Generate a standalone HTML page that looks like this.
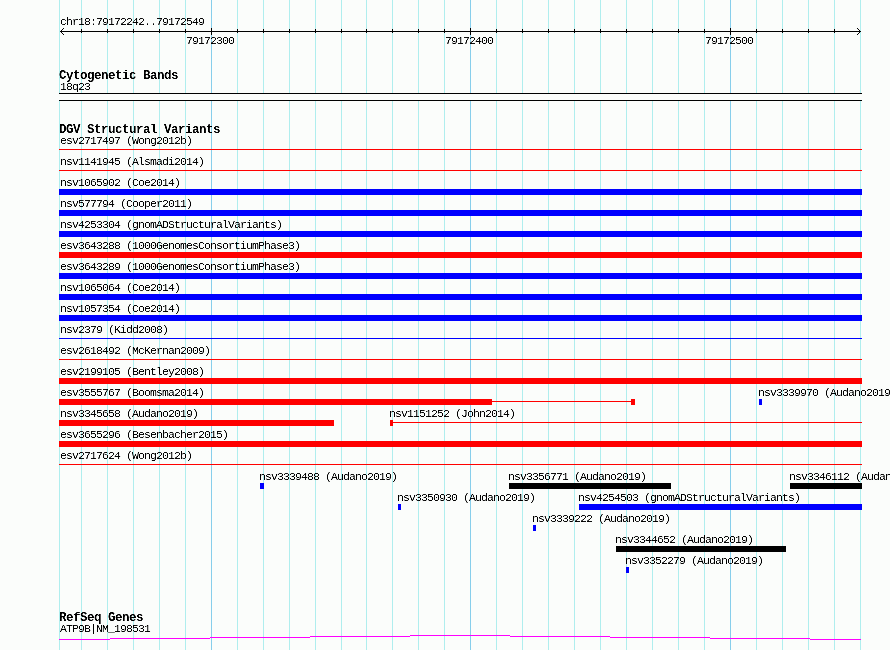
<!DOCTYPE html>
<html><head><meta charset="utf-8"><title>chr18:79172242..79172549</title>
<style>
html,body{margin:0;padding:0;}
body{width:890px;height:650px;overflow:hidden;background:#fbfdfb;position:relative;}
svg{position:absolute;left:0;top:0;}
#txt{position:absolute;left:0;top:0;width:890px;height:650px;filter:url(#crisp);}
.t,.b{position:absolute;white-space:pre;font-family:"Liberation Mono",monospace;color:#000;transform-origin:0 0;}
.t{font-size:11.5px;line-height:11.5px;letter-spacing:-0.9px;transform:scaleX(1.0);}
.b{font-size:12.5px;line-height:12.5px;font-weight:bold;letter-spacing:-0.5px;transform:scaleX(1.0);}
</style></head><body>
<svg width="890" height="650" viewBox="0 0 890 650" shape-rendering="crispEdges">
<defs><filter id="crisp" x="0" y="0" width="100%" height="100%" color-interpolation-filters="sRGB"><feComponentTransfer><feFuncA type="linear" slope="1.9" intercept="-0.45"/></feComponentTransfer></filter></defs>
<rect x="59" y="0" width="1" height="650" fill="#afeeee"/>
<rect x="860" y="0" width="1" height="650" fill="#afeeee"/>
<rect x="81" y="0" width="1" height="650" fill="#afeeee"/>
<rect x="107" y="0" width="1" height="650" fill="#afeeee"/>
<rect x="133" y="0" width="1" height="650" fill="#afeeee"/>
<rect x="159" y="0" width="1" height="650" fill="#afeeee"/>
<rect x="185" y="0" width="1" height="650" fill="#afeeee"/>
<rect x="237" y="0" width="1" height="650" fill="#afeeee"/>
<rect x="263" y="0" width="1" height="650" fill="#afeeee"/>
<rect x="289" y="0" width="1" height="650" fill="#afeeee"/>
<rect x="315" y="0" width="1" height="650" fill="#afeeee"/>
<rect x="341" y="0" width="1" height="650" fill="#afeeee"/>
<rect x="366" y="0" width="1" height="650" fill="#afeeee"/>
<rect x="392" y="0" width="1" height="650" fill="#afeeee"/>
<rect x="418" y="0" width="1" height="650" fill="#afeeee"/>
<rect x="444" y="0" width="1" height="650" fill="#afeeee"/>
<rect x="496" y="0" width="1" height="650" fill="#afeeee"/>
<rect x="522" y="0" width="1" height="650" fill="#afeeee"/>
<rect x="548" y="0" width="1" height="650" fill="#afeeee"/>
<rect x="574" y="0" width="1" height="650" fill="#afeeee"/>
<rect x="600" y="0" width="1" height="650" fill="#afeeee"/>
<rect x="626" y="0" width="1" height="650" fill="#afeeee"/>
<rect x="652" y="0" width="1" height="650" fill="#afeeee"/>
<rect x="678" y="0" width="1" height="650" fill="#afeeee"/>
<rect x="704" y="0" width="1" height="650" fill="#afeeee"/>
<rect x="756" y="0" width="1" height="650" fill="#afeeee"/>
<rect x="782" y="0" width="1" height="650" fill="#afeeee"/>
<rect x="808" y="0" width="1" height="650" fill="#afeeee"/>
<rect x="834" y="0" width="1" height="650" fill="#afeeee"/>
<rect x="211" y="0" width="1" height="650" fill="#87ceeb"/>
<rect x="470" y="0" width="1" height="650" fill="#87ceeb"/>
<rect x="730" y="0" width="1" height="650" fill="#87ceeb"/>
<rect x="60" y="31" width="801" height="1" fill="#000"/>
<rect x="81" y="29" width="1" height="4" fill="#000"/>
<rect x="107" y="29" width="1" height="4" fill="#000"/>
<rect x="133" y="29" width="1" height="4" fill="#000"/>
<rect x="159" y="29" width="1" height="4" fill="#000"/>
<rect x="185" y="29" width="1" height="4" fill="#000"/>
<rect x="237" y="29" width="1" height="4" fill="#000"/>
<rect x="263" y="29" width="1" height="4" fill="#000"/>
<rect x="289" y="29" width="1" height="4" fill="#000"/>
<rect x="315" y="29" width="1" height="4" fill="#000"/>
<rect x="341" y="29" width="1" height="4" fill="#000"/>
<rect x="366" y="29" width="1" height="4" fill="#000"/>
<rect x="392" y="29" width="1" height="4" fill="#000"/>
<rect x="418" y="29" width="1" height="4" fill="#000"/>
<rect x="444" y="29" width="1" height="4" fill="#000"/>
<rect x="496" y="29" width="1" height="4" fill="#000"/>
<rect x="522" y="29" width="1" height="4" fill="#000"/>
<rect x="548" y="29" width="1" height="4" fill="#000"/>
<rect x="574" y="29" width="1" height="4" fill="#000"/>
<rect x="600" y="29" width="1" height="4" fill="#000"/>
<rect x="626" y="29" width="1" height="4" fill="#000"/>
<rect x="652" y="29" width="1" height="4" fill="#000"/>
<rect x="678" y="29" width="1" height="4" fill="#000"/>
<rect x="704" y="29" width="1" height="4" fill="#000"/>
<rect x="756" y="29" width="1" height="4" fill="#000"/>
<rect x="782" y="29" width="1" height="4" fill="#000"/>
<rect x="808" y="29" width="1" height="4" fill="#000"/>
<rect x="834" y="29" width="1" height="4" fill="#000"/>
<rect x="211" y="28" width="1" height="7" fill="#000"/>
<rect x="470" y="28" width="1" height="7" fill="#000"/>
<rect x="730" y="28" width="1" height="7" fill="#000"/>
<rect x="61" y="30" width="1" height="1" fill="#000"/>
<rect x="61" y="32" width="1" height="1" fill="#000"/>
<rect x="859" y="30" width="1" height="1" fill="#000"/>
<rect x="859" y="32" width="1" height="1" fill="#000"/>
<rect x="62" y="29" width="1" height="1" fill="#000"/>
<rect x="62" y="33" width="1" height="1" fill="#000"/>
<rect x="858" y="29" width="1" height="1" fill="#000"/>
<rect x="858" y="33" width="1" height="1" fill="#000"/>
<rect x="63" y="28" width="1" height="1" fill="#000"/>
<rect x="63" y="34" width="1" height="1" fill="#000"/>
<rect x="857" y="28" width="1" height="1" fill="#000"/>
<rect x="857" y="34" width="1" height="1" fill="#000"/>
<rect x="59" y="94" width="803" height="6" fill="#fbfdfb"/>
<rect x="59" y="93" width="803" height="1" fill="#000"/>
<rect x="59" y="100" width="803" height="1" fill="#000"/>
<rect x="59" y="149" width="803" height="1" fill="#ff0000"/>
<rect x="59" y="170" width="803" height="1" fill="#ff0000"/>
<rect x="59" y="189" width="803" height="6" fill="#0000ff"/>
<rect x="59" y="210" width="803" height="6" fill="#0000ff"/>
<rect x="59" y="231" width="803" height="6" fill="#0000ff"/>
<rect x="59" y="252" width="803" height="6" fill="#ff0000"/>
<rect x="59" y="273" width="803" height="6" fill="#0000ff"/>
<rect x="59" y="294" width="803" height="6" fill="#0000ff"/>
<rect x="59" y="315" width="803" height="6" fill="#0000ff"/>
<rect x="59" y="338" width="803" height="1" fill="#0000ff"/>
<rect x="59" y="359" width="803" height="1" fill="#ff0000"/>
<rect x="59" y="378" width="803" height="6" fill="#ff0000"/>
<rect x="59" y="399" width="433" height="6" fill="#ff0000"/>
<rect x="492" y="401" width="139" height="1" fill="#ff0000"/>
<rect x="631" y="399" width="4" height="6" fill="#ff0000"/>
<rect x="759" y="399" width="3" height="6" fill="#0000ff"/>
<rect x="59" y="420" width="275" height="6" fill="#ff0000"/>
<rect x="390" y="420" width="3" height="6" fill="#ff0000"/>
<rect x="393" y="422" width="469" height="1" fill="#ff0000"/>
<rect x="59" y="441" width="803" height="6" fill="#ff0000"/>
<rect x="59" y="464" width="803" height="1" fill="#ff0000"/>
<rect x="260" y="483" width="4" height="6" fill="#0000ff"/>
<rect x="509" y="483" width="162" height="6" fill="#000000"/>
<rect x="790" y="483" width="72" height="6" fill="#000000"/>
<rect x="398" y="504" width="3" height="6" fill="#0000ff"/>
<rect x="579" y="504" width="283" height="6" fill="#0000ff"/>
<rect x="533" y="525" width="3" height="6" fill="#0000ff"/>
<rect x="616" y="546" width="170" height="6" fill="#000000"/>
<rect x="626" y="567" width="3" height="6" fill="#0000ff"/>
<rect x="59" y="639" width="51" height="1" fill="#ff00ff"/>
<rect x="110" y="638" width="100" height="1" fill="#ff00ff"/>
<rect x="210" y="637" width="100" height="1" fill="#ff00ff"/>
<rect x="310" y="636" width="100" height="1" fill="#ff00ff"/>
<rect x="410" y="635" width="100" height="1" fill="#ff00ff"/>
<rect x="510" y="636" width="100" height="1" fill="#ff00ff"/>
<rect x="610" y="637" width="100" height="1" fill="#ff00ff"/>
<rect x="710" y="638" width="100" height="1" fill="#ff00ff"/>
<rect x="810" y="639" width="51" height="1" fill="#ff00ff"/>
</svg>
<div id="txt">
<div class="t" style="left:60px;top:16px">chr18:79172242..79172549</div>
<div class="t" style="left:186px;top:35px">79172300</div>
<div class="t" style="left:445px;top:35px">79172400</div>
<div class="t" style="left:705px;top:35px">79172500</div>
<div class="b" style="left:59px;top:70px">Cytogenetic Bands</div>
<div class="t" style="left:60px;top:81px">18q23</div>
<div class="b" style="left:59px;top:124px">DGV Structural Variants</div>
<div class="t" style="left:60px;top:135px">esv2717497 (Wong2012b)</div>
<div class="t" style="left:60px;top:156px">nsv1141945 (Alsmadi2014)</div>
<div class="t" style="left:60px;top:177px">nsv1065902 (Coe2014)</div>
<div class="t" style="left:60px;top:198px">nsv577794 (Cooper2011)</div>
<div class="t" style="left:60px;top:219px">nsv4253304 (gnomADStructuralVariants)</div>
<div class="t" style="left:60px;top:240px">esv3643288 (1000GenomesConsortiumPhase3)</div>
<div class="t" style="left:60px;top:261px">esv3643289 (1000GenomesConsortiumPhase3)</div>
<div class="t" style="left:60px;top:282px">nsv1065064 (Coe2014)</div>
<div class="t" style="left:60px;top:303px">nsv1057354 (Coe2014)</div>
<div class="t" style="left:60px;top:324px">nsv2379 (Kidd2008)</div>
<div class="t" style="left:60px;top:345px">esv2618492 (McKernan2009)</div>
<div class="t" style="left:60px;top:366px">esv2199105 (Bentley2008)</div>
<div class="t" style="left:60px;top:387px">esv3555767 (Boomsma2014)</div>
<div class="t" style="left:758px;top:387px">nsv3339970 (Audano2019)</div>
<div class="t" style="left:60px;top:408px">nsv3345658 (Audano2019)</div>
<div class="t" style="left:389px;top:408px">nsv1151252 (John2014)</div>
<div class="t" style="left:60px;top:429px">esv3655296 (Besenbacher2015)</div>
<div class="t" style="left:60px;top:450px">esv2717624 (Wong2012b)</div>
<div class="t" style="left:259px;top:471px">nsv3339488 (Audano2019)</div>
<div class="t" style="left:508px;top:471px">nsv3356771 (Audano2019)</div>
<div class="t" style="left:789px;top:471px">nsv3346112 (Audano2019)</div>
<div class="t" style="left:397px;top:492px">nsv3350930 (Audano2019)</div>
<div class="t" style="left:578px;top:492px">nsv4254503 (gnomADStructuralVariants)</div>
<div class="t" style="left:532px;top:513px">nsv3339222 (Audano2019)</div>
<div class="t" style="left:615px;top:534px">nsv3344652 (Audano2019)</div>
<div class="t" style="left:625px;top:555px">nsv3352279 (Audano2019)</div>
<div class="b" style="left:59px;top:612px">RefSeq Genes</div>
<div class="t" style="left:60px;top:623px">ATP9B|NM_198531</div>
</div>
</body></html>
